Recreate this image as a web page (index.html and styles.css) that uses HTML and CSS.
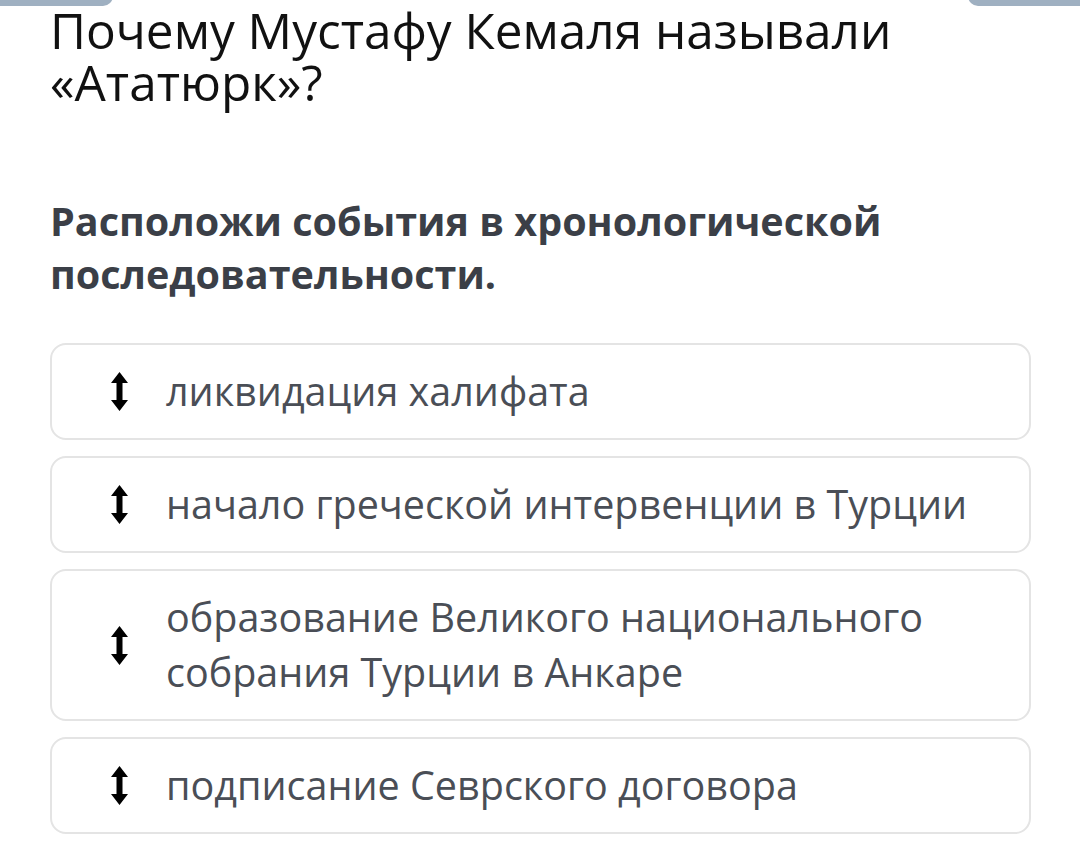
FILE: index.html
```html
<!DOCTYPE html>
<html lang="ru">
<head>
<meta charset="utf-8">
<link rel="stylesheet" href="styles.css">
</head>
<body>
<div class="topbars">
  <div class="tab tab-left"></div>
  <div class="tab tab-right"></div>
</div>
<main class="page">
  <h1 class="title">Почему Мустафу Кемаля называли «Ататюрк»?</h1>
  <p class="instruction">Расположи события в хронологической последовательности.</p>
  <ul class="list">
    <li class="item">
      <svg class="arrow" viewBox="0 0 17 39" width="17" height="39"><path d="M8.5 0 L17 11 L11.5 11 L11.5 28 L17 28 L8.5 39 L0 28 L5.5 28 L5.5 11 L0 11 Z" fill="#000"/></svg>
      <span class="text">ликвидация халифата</span>
    </li>
    <li class="item">
      <svg class="arrow" viewBox="0 0 17 39" width="17" height="39"><path d="M8.5 0 L17 11 L11.5 11 L11.5 28 L17 28 L8.5 39 L0 28 L5.5 28 L5.5 11 L0 11 Z" fill="#000"/></svg>
      <span class="text">начало греческой интервенции в Турции</span>
    </li>
    <li class="item">
      <svg class="arrow" viewBox="0 0 17 39" width="17" height="39"><path d="M8.5 0 L17 11 L11.5 11 L11.5 28 L17 28 L8.5 39 L0 28 L5.5 28 L5.5 11 L0 11 Z" fill="#000"/></svg>
      <span class="text">образование Великого национального собрания Турции в Анкаре</span>
    </li>
    <li class="item">
      <svg class="arrow" viewBox="0 0 17 39" width="17" height="39"><path d="M8.5 0 L17 11 L11.5 11 L11.5 28 L17 28 L8.5 39 L0 28 L5.5 28 L5.5 11 L0 11 Z" fill="#000"/></svg>
      <span class="text">подписание Севрского договора</span>
    </li>
  </ul>
</main>
</body>
</html>
```

FILE: styles.css
```css
html, body {
  margin: 0;
  padding: 0;
  background: #fff;
}
body {
  font-family: "Open Sans", "Noto Sans", sans-serif;
  width: 1080px;
  height: 859px;
  overflow: hidden;
  position: relative;
}
.topbars {
  position: absolute;
  top: 0;
  left: 0;
  right: 0;
  height: 0;
}
.tab {
  position: absolute;
  top: -10px;
  height: 16px;
  background: #9fb0c1;
}
.tab-left {
  left: -20px;
  width: 133px;
  border-radius: 0 0 10px 0;
}
.tab-right {
  right: -20px;
  width: 132px;
  border-radius: 0 0 0 10px;
}
.page {
  padding: 4px 48px 0 50px;
}
.title {
  margin: 0;
  font-weight: 400;
  font-size: 49.5px;
  line-height: 52px;
  color: #111;
  width: 960px;
}
.instruction {
  margin: 87px 0 0 0;
  font-weight: 700;
  font-size: 39.5px;
  line-height: 53px;
  color: #3b3f47;
  width: 960px;
}
.list {
  list-style: none;
  margin: 42px 0 0 0;
  padding: 0;
  display: flex;
  flex-direction: column;
  gap: 16px;
  width: 981px;
}
.item {
  display: flex;
  align-items: center;
  border: 2px solid #e4e4e4;
  border-radius: 16px;
  padding: 19px 20px 19px 59px;
}
.arrow {
  flex: none;
  display: block;
}
.text {
  margin-left: 38px;
  font-size: 39.5px;
  line-height: 55px;
  color: #4a4e56;
}
```
